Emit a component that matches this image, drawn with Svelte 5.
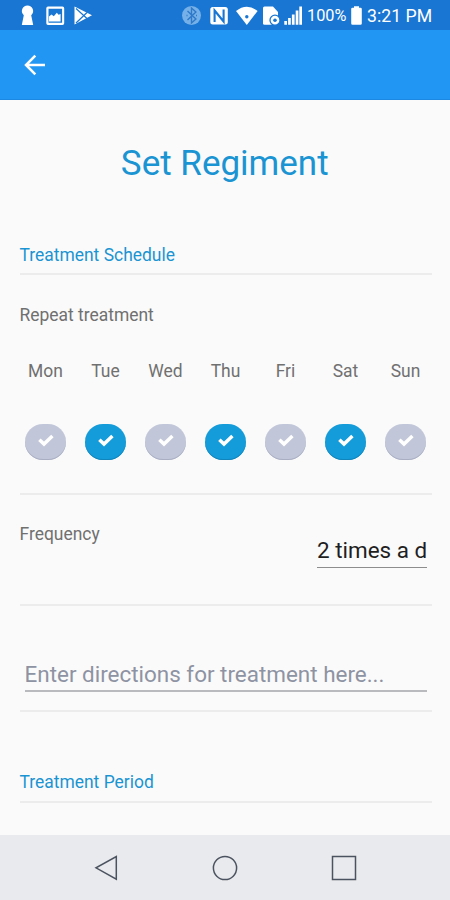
<script lang="ts">
  interface Day {
    label: string;
    selected: boolean;
  }

  let days: Day[] = $state([
    { label: 'Mon', selected: false },
    { label: 'Tue', selected: true },
    { label: 'Wed', selected: false },
    { label: 'Thu', selected: true },
    { label: 'Fri', selected: false },
    { label: 'Sat', selected: true },
    { label: 'Sun', selected: false }
  ]);

  let frequency = $state('2 times a day');
  let directions = $state('');
</script>

<div class="screen">
  <div class="status-bar">
    <!-- keyhole, picture, play store -->
    <svg class="notifications" width="76" height="30" viewBox="0 0 76 30" fill="#fff">
      <path d="M7.5 5.5a5.6 5.6 0 0 1 3.7 9.8L13.2 25H1.8l2-9.7A5.6 5.6 0 0 1 7.5 5.5z" />
      <path
        fill-rule="evenodd"
        d="M28 6.5h14.5q1.7 0 1.7 1.7v15q0 1.7-1.7 1.7H28q-1.7 0-1.7-1.7v-15q0-1.7 1.7-1.7zm.5 2.2v14h13.6v-14z"
      />
      <path d="M29 21.5v-5l2.5-2 2.3 1.7 3-3.4 1.8 2 2-.8v7.5z" />
      <path d="M54.5 6.5 72 15.3 54.5 24.5z" />
      <path d="m56 8.5 11 10M56 23l11-10.5" fill="none" stroke="#1976d2" stroke-width="1.2" />
    </svg>

    <div class="indicators">
      <!-- bluetooth, nfc, wifi, sim, signal -->
      <svg width="121" height="30" viewBox="0 0 121 30" fill="#fff">
        <circle cx="9.5" cy="15.5" r="9.5" fill="#75b0e8" />
        <path d="m5.5 11 8.4 8-4.4 4V8l4.4 4-8.4 8M4.5 15.5h1M14 15.5h1" fill="none" stroke="#2e79c9" stroke-width="1.4" />
        <rect x="28.3" y="7" width="17.5" height="17.5" rx="2.5" />
        <path d="M32.6 22V10.5l9 11V9.5" fill="none" stroke="#1976d2" stroke-width="2.1" />
        <path d="M54 11q10.8-8.5 21.6 0L64.8 25z" />
        <circle cx="64.8" cy="16.8" r="1.7" fill="#1976d2" />
        <path d="M82.5 6.5H91l5 5.5v12.7H82.5q-1.5 0-1.5-1.5V8q0-1.5 1.5-1.5z" />
        <circle cx="93" cy="20.2" r="5" stroke="#1976d2" stroke-width="1.3" />
        <circle cx="93" cy="20.2" r="1.8" fill="#1976d2" />
        <path d="M102.3 21h2.7v3.7h-2.7zM106.1 18h2.7v6.7h-2.7zM109.9 14.5h2.7v10.2h-2.7zM113.7 10.5h2.7v14.2h-2.7zM117.3 6.5h2.7v18.2h-2.7z" />
      </svg>
      <span class="percent">100%</span>
      <svg class="battery" width="11" height="30" viewBox="0 0 11 30" fill="#fff">
        <path d="M3 6.2h5v1.6h1.5q1.3 0 1.3 1.3v14.3q0 1.3-1.3 1.3h-8q-1.3 0-1.3-1.3V9.1q0-1.3 1.3-1.3H3z" />
      </svg>
      <span class="clock">3:21 PM</span>
    </div>
  </div>

  <header class="app-bar">
    <button class="back" type="button" aria-label="Back">
      <svg width="22" height="22" viewBox="0 0 22 22" fill="none" stroke="#fff" stroke-width="2.5">
        <path d="M21 11H2.5M11.3 1.6 2 11l9.3 9.4" />
      </svg>
    </button>
  </header>

  <main class="content">
    <h1>Set Regiment</h1>

    <h2>Treatment Schedule</h2>

    <section class="repeat">
      <p class="label">Repeat treatment</p>
      <div class="days">
        {#each days as day (day.label)}
          <div class="day">
            <span class="day-name">{day.label}</span>
            <button
              class="toggle"
              class:selected={day.selected}
              type="button"
              aria-label={day.label}
              aria-pressed={day.selected}
              onclick={() => (day.selected = !day.selected)}
            >
              <svg width="16" height="13" viewBox="0 0 16 13" fill="none" stroke="#fff" stroke-width="3.5">
                <path d="m1.4 5.7 4.6 4.4 8.4-8.2" />
              </svg>
            </button>
          </div>
        {/each}
      </div>
    </section>

    <section class="frequency">
      <p class="label">Frequency</p>
      <input class="field" type="text" aria-label="Frequency" bind:value={frequency} />
    </section>

    <section class="directions">
      <input
        class="field"
        type="text"
        placeholder="Enter directions for treatment here..."
        bind:value={directions}
      />
    </section>

    <h2 class="period">Treatment Period</h2>
  </main>

  <nav class="nav-bar">
    <svg width="24" height="26" viewBox="0 0 24 26"><path d="M22.3 1.5v22.6L2 12.8z" /></svg>
    <svg width="26" height="26" viewBox="0 0 26 26"><circle cx="13" cy="13" r="11.6" /></svg>
    <svg width="26" height="26" viewBox="0 0 26 26"><rect x="1.5" y="1.5" width="23" height="23" /></svg>
  </nav>
</div>

<style>
  :global(body) {
    margin: 0;
  }

  .screen {
    display: flex;
    flex-direction: column;
    width: 450px;
    height: 900px;
    overflow: hidden;
    background: #fafafa;
    font-family: Roboto, sans-serif;
    color: #707070;
  }

  .status-bar {
    display: flex;
    justify-content: space-between;
    height: 30px;
    padding: 0 18px 0 20px;
    background: #1976d2;
    color: #fff;
  }

  .indicators {
    display: flex;
  }

  .percent,
  .clock {
    line-height: 32px;
    white-space: nowrap;
  }

  .percent {
    width: 39px;
    margin-left: 4px;
    font-size: 16.3px;
  }

  .battery {
    margin-left: 5px;
  }

  .clock {
    width: 65px;
    margin-left: 5px;
    font-size: 17.7px;
  }

  .app-bar {
    display: flex;
    align-items: center;
    box-sizing: border-box;
    height: 70px;
    padding-left: 24px;
    background: #2196f3;
    border-bottom: 1px solid #1c88e2;
  }

  .back {
    display: flex;
    padding: 0;
    border: none;
    background: none;
    cursor: pointer;
  }

  .content {
    flex: 1;
    min-height: 0;
    padding: 0 18px 0 19.5px;
  }

  h1 {
    margin: 43px 2px 0 0;
    font-size: 35px;
    font-weight: 400;
    line-height: 42px;
    text-align: center;
    color: #1a94d2;
  }

  h2 {
    margin: 60px 0 0;
    padding-bottom: 8px;
    border-bottom: 2px solid #ececed;
    font-size: 17.45px;
    font-weight: 400;
    line-height: 20px;
    color: #1a94d2;
  }

  .label {
    margin: 0;
    font-size: 17.45px;
    line-height: 20px;
  }

  .repeat {
    height: 188px;
    padding-top: 30px;
    border-bottom: 2px solid #ececed;
  }

  .days {
    display: flex;
    justify-content: space-between;
    padding: 36px 6px 0 5.5px;
  }

  .day {
    display: flex;
    flex-direction: column;
    align-items: center;
    gap: 43px;
    width: 41px;
  }

  .day-name {
    font-size: 17.45px;
    line-height: 20px;
  }

  .toggle {
    display: flex;
    align-items: center;
    justify-content: center;
    box-sizing: border-box;
    width: 41px;
    height: 36px;
    padding: 0 0 3px;
    border: none;
    border-radius: 18px;
    background: #c1c6d9;
    box-shadow: inset 0 -1px 0 #a9aec2;
    cursor: pointer;
  }

  .toggle.selected {
    background: #149bd9;
    box-shadow: inset 0 -1px 0 #1184bb;
  }

  .field {
    box-sizing: border-box;
    padding: 0 0 2px;
    border: none;
    border-bottom: 1px solid #8d8d8d;
    outline: none;
    background: none;
    font-family: inherit;
    font-size: 22.45px;
    color: #1f1f1f;
  }

  .field::placeholder {
    color: #8e93a3;
    opacity: 1;
  }

  .frequency {
    display: flex;
    justify-content: space-between;
    height: 80px;
    padding: 29px 5px 0 0;
    border-bottom: 2px solid #ececed;
  }

  .frequency .field {
    width: 110px;
    height: 34px;
    margin-top: 10px;
  }

  .directions {
    height: 51px;
    padding: 53px 5px 0;
    border-bottom: 2px solid #ececed;
  }

  .directions .field {
    width: 100%;
    height: 33px;
    border-bottom: 2px solid #b9babd;
  }

  .period {
    margin-top: 60px;
    padding-bottom: 9px;
  }

  .nav-bar {
    display: flex;
    justify-content: space-between;
    box-sizing: border-box;
    height: 65px;
    padding: 20px 93px 0 94px;
    background: #e8eaed;
  }

  .nav-bar svg {
    fill: none;
    stroke: #4c5360;
    stroke-width: 1.5;
  }
</style>
